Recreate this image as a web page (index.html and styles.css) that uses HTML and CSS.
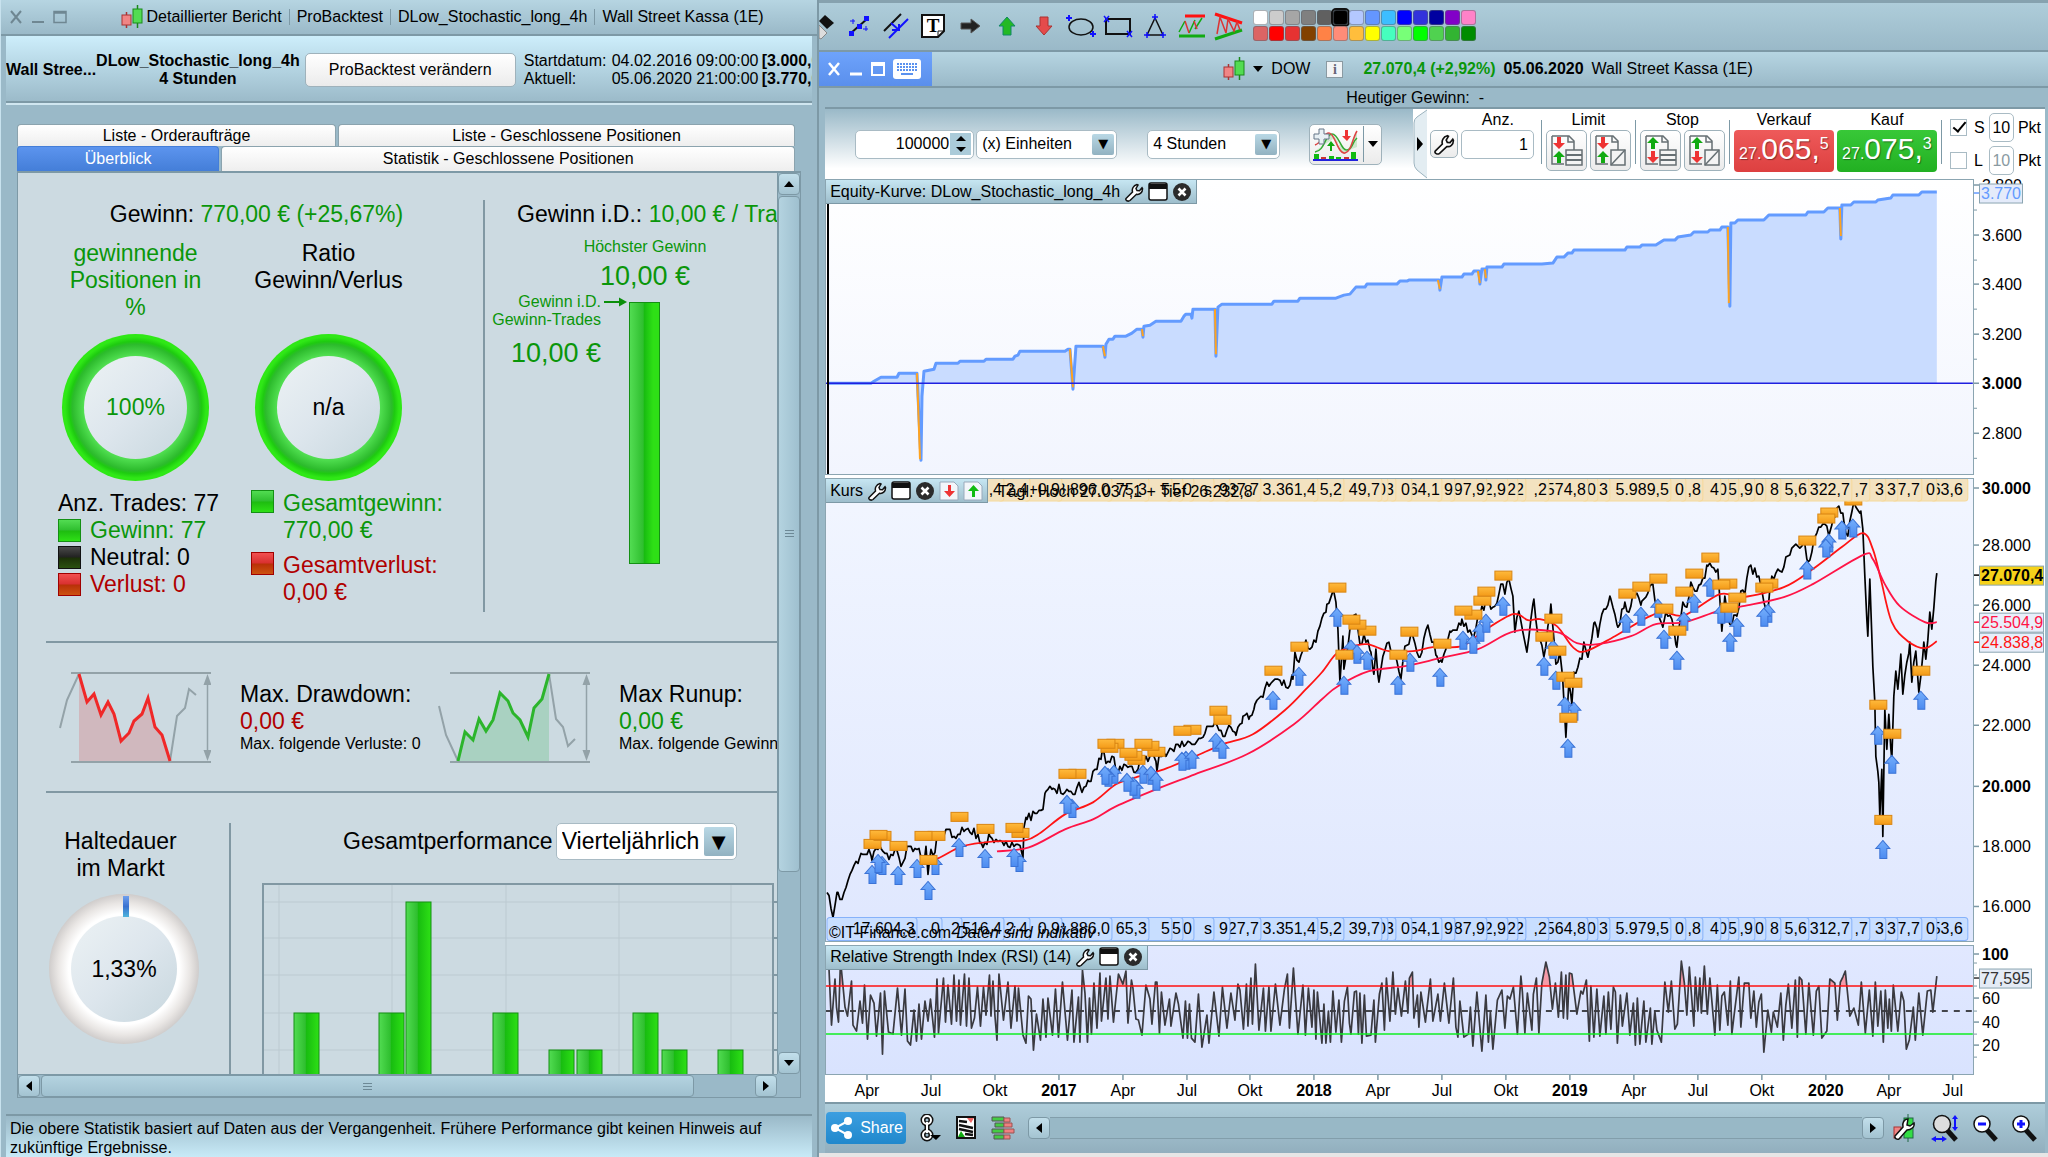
FILE: index.html
```
<!DOCTYPE html>
<html lang="de">
<head>
<meta charset="UTF-8">
<meta name="viewport" content="width=device-width, initial-scale=1.0">
<title>Detaillierter Bericht - ProBacktest</title>
<link rel="stylesheet" href="styles.css">
</head>
<body>

<!-- shared symbols -->
<svg class="symbols" width="0" height="0">
    <symbol id="candles" viewBox="0 0 22 24">
        <path d="M5.5 7v16" stroke="#a33" stroke-width="1.5"/>
        <rect x="1" y="10" width="9" height="10" fill="#f08585" stroke="#a33"/>
        <path d="M16.5 0v23" stroke="#1a8a1a" stroke-width="1.5"/>
        <rect x="12" y="4" width="9" height="14" fill="#52dc52" stroke="#1a8a1a"/>
    </symbol>
    <symbol id="wrench" viewBox="0 0 20 20">
        <path d="M2 16.500L8.500 10c-.8-3 .7-6.500 4.500-7.500l1 .5-2 3.500 1 2 2.500.2 2.500-3 .5.800c.3 4-3 6.500-6 5.800L6 18.500c-2 1.500-5-.2-4-2z" fill="#fff" stroke="#111" stroke-width="1.500"/>
    </symbol>
    <symbol id="maximize" viewBox="0 0 20 20">
        <rect x="1" y="1" width="18" height="17" rx="2" fill="#fff" stroke="#111" stroke-width="1.500"/>
        <path d="M1 2h18v5H1z" fill="#111"/>
    </symbol>
    <symbol id="close" viewBox="0 0 20 20">
        <circle cx="10" cy="10" r="9" fill="#2b2b2b"/>
        <path d="M6.500 6.500l7 7m0-7l-7 7" stroke="#fff" stroke-width="2.600"/>
    </symbol>
    <symbol id="sheet-down" viewBox="0 0 20 20">
        <path d="M1 1h14l4 4v14H1z" fill="#f2f6fa" stroke="#9ab"/>
        <path d="M9 4h3v6h4l-5.500 6L5 10h4z" fill="#e33"/>
    </symbol>
    <symbol id="sheet-up" viewBox="0 0 20 20">
        <path d="M1 1h14l4 4v14H1z" fill="#f2f6fa" stroke="#9ab"/>
        <path d="M9 16h3v-6h4l-5.500-6L5 10h4z" fill="#1b1"/>
    </symbol>
    <symbol id="order-list" viewBox="0 0 34 34">
        <path d="M2 2h17l5 5v9M2 2v28h12" fill="none" stroke="#666f73" stroke-width="1.500"/>
        <path d="M18 2v6h6" fill="none" stroke="#666f73" stroke-width="1.500"/>
        <path d="M16 16h16v15H16z" fill="#f4f4f4" stroke="#666f73" stroke-width="1.500"/>
        <path d="M16 21h16M16 26h16" stroke="#666f73" stroke-width="2"/>
    </symbol>
    <symbol id="order-page" viewBox="0 0 34 34">
        <path d="M2 2h17l5 5v9M2 2v28h12" fill="none" stroke="#666f73" stroke-width="1.500"/>
        <path d="M18 2v6h6" fill="none" stroke="#666f73" stroke-width="1.500"/>
        <path d="M17 16h14v15H17z" fill="#f4f4f4" stroke="#666f73" stroke-width="1.500"/>
        <path d="M17 31L31 16" stroke="#666f73" stroke-width="1.500"/>
    </symbol>
    <symbol id="arr-down" viewBox="0 0 12 12"><path d="M4 0h4v6h4l-6 6-6-6h4z"/></symbol>
    <symbol id="arr-up" viewBox="0 0 12 12"><path d="M4 12h4V6h4L6 0 0 6h4z"/></symbol>
    <linearGradient id="gOrange" x2="0" y2="1"><stop offset="0" stop-color="#ffba3c"/><stop offset="1" stop-color="#f39a18"/></linearGradient>
    <linearGradient id="gBlue" x2="0" y2="1"><stop offset="0" stop-color="#74aefc"/><stop offset="1" stop-color="#4c8bf0"/></linearGradient>
    <linearGradient id="gGreen" x2="1" y2="0"><stop offset="0" stop-color="#52dc52"/><stop offset=".45" stop-color="#2fbf2f"/><stop offset=".5" stop-color="#18bd10"/><stop offset="1" stop-color="#2ee016"/></linearGradient>
</svg>

<div class="desktop">

    <!-- backtest report -->
    <section class="window report">
        <header class="titlebar">
            <div class="win-buttons">
                <button aria-label="Schließen"><svg width="14" height="14"><path d="M2 1l10 12M12 1L2 13" stroke="#6f8792" stroke-width="2"/></svg></button>
                <button aria-label="Minimieren"><svg width="14" height="14"><path d="M1 12h12" stroke="#6f8792" stroke-width="2"/></svg></button>
                <button aria-label="Maximieren"><svg width="14" height="14"><path d="M1 1.500h12v11H1zM1 3h12" fill="none" stroke="#6f8792" stroke-width="1.500"/></svg></button>
            </div>
            <div class="title-text">
                <svg width="22" height="24"><use href="#candles"/></svg>
                <span>Detaillierter Bericht</span><i></i><span>ProBacktest</span><i></i><span>DLow_Stochastic_long_4h</span><i></i><span>Wall Street Kassa (1E)</span>
            </div>
        </header>

        <div class="infobar">
            <b>Wall Stree...</b>
            <b class="strategy">DLow_Stochastic_long_4h<br>4 Stunden</b>
            <button class="btn">ProBacktest verändern</button>
            <div class="dates">
                <span>Startdatum:</span><span>04.02.2016 09:00:00</span><b>[3.000,00 €]</b>
                <span>Aktuell:</span><span>05.06.2020 21:00:00</span><b>[3.770,00 €]</b>
            </div>
        </div>

        <div class="tabs">
            <div class="tab-row">
                <button class="tab tab-orders">Liste - Orderaufträge</button>
                <button class="tab">Liste - Geschlossene Positionen</button>
            </div>
            <div class="tab-row second">
                <button class="tab active">Überblick</button>
                <button class="tab">Statistik - Geschlossene Positionen</button>
            </div>
        </div>

        <div class="pane">
            <div class="overview">
                <div class="block gains">
                    <div class="gain-total">
                        <h2>Gewinn: <span class="green">770,00 € (+25,67%)</span></h2>
                        <div class="gauges">
                            <div class="gauge">
                                <p class="gauge-title green">gewinnende<br>Positionen in<br>%</p>
                                <div class="donut green">100%</div>
                                <div class="legend">
                                    <p>Anz. Trades: 77</p>
                                    <p class="green"><i class="sw sw-green"></i>Gewinn: 77</p>
                                    <p><i class="sw sw-black"></i>Neutral: 0</p>
                                    <p class="red"><i class="sw sw-red"></i>Verlust: 0</p>
                                </div>
                            </div>
                            <div class="gauge">
                                <p class="gauge-title">Ratio<br>Gewinn/Verlus</p>
                                <div class="donut">n/a</div>
                                <div class="legend sums">
                                    <p class="green"><i class="sw sw-green"></i><span>Gesamtgewinn:<br>770,00 €</span></p>
                                    <p class="red"><i class="sw sw-red"></i><span>Gesamtverlust:<br>0,00 €</span></p>
                                </div>
                            </div>
                        </div>
                    </div>
                    <div class="gain-average">
                        <h2>Gewinn i.D.: <span class="green">10,00 € / Trade</span></h2>
                        <div class="highest">
                            <p>Höchster Gewinn</p>
                            <p class="amount">10,00 €</p>
                        </div>
                        <div class="average-row">
                            <div class="average-text">
                                <p>Gewinn i.D.</p>
                                <p>Gewinn-Trades</p>
                                <p class="amount">10,00 €</p>
                            </div>
                            <svg width="24" height="18"><path d="M0 9h17" stroke="#0a8f0a" stroke-width="2"/><path d="M15 4.500l8 4.500-8 4.500z" fill="#0a8f0a"/></svg>
                            <div class="average-bar"></div>
                        </div>
                    </div>
                </div>

                <div class="block extremes">
                    <div class="extreme">
                        <svg width="152" height="96" fill="none">
                            <path d="M20 4L28 32 35 24 42 45 49 32 55 44 62 71 70 63 75 51 83 44 89 28 96 57 103 65 111 91H20z" fill="#e03030" opacity=".2"/>
                            <path d="M12 3h140M12 92h140" stroke="#93a2a8" stroke-width="2"/>
                            <path d="M148.500 10v76" stroke="#93a2a8" stroke-width="1.500"/>
                            <path d="M148.500 4l4 11h-8zM148.500 91l4-11h-8z" fill="#93a2a8"/>
                            <path d="M1 58L8 30 20 4M111 91l7-45 8-8 4-19 7 6" stroke="#93a2a8" stroke-width="2"/>
                            <path d="M20 4L28 32 35 24 42 45 49 32 55 44 62 71 70 63 75 51 83 44 89 28 96 57 103 65 111 91" stroke="#f02828" stroke-width="3"/>
                        </svg>
                        <div>
                            <p>Max. Drawdown:</p>
                            <p class="red">0,00 €</p>
                            <p class="small">Max. folgende Verluste: 0</p>
                        </div>
                    </div>
                    <div class="extreme">
                        <svg width="152" height="96" fill="none">
                            <path d="M20 91L27 62 35 70 41 49 48 61 55 50 62 23 70 31 75 43 82 50 90 67 96 38 104 29 111 4V91z" fill="#20b040" opacity=".2"/>
                            <path d="M12 3h140M12 92h140" stroke="#93a2a8" stroke-width="2"/>
                            <path d="M148.500 10v76" stroke="#93a2a8" stroke-width="1.500"/>
                            <path d="M148.500 4l4 11h-8zM148.500 91l4-11h-8z" fill="#93a2a8"/>
                            <path d="M1 36L8 65 20 91M111 4l7 45 7 8 5 19 7-7" stroke="#93a2a8" stroke-width="2"/>
                            <path d="M20 91L27 62 35 70 41 49 48 61 55 50 62 23 70 31 75 43 82 50 90 67 96 38 104 29 111 4" stroke="#2cb52c" stroke-width="3"/>
                        </svg>
                        <div>
                            <p>Max Runup:</p>
                            <p class="green">0,00 €</p>
                            <p class="small">Max. folgende Gewinne: 77</p>
                        </div>
                    </div>
                </div>

                <div class="block performance">
                    <div class="holding">
                        <p>Haltedauer<br>im Markt</p>
                        <div class="donut donut-grey">1,33%</div>
                    </div>
                    <div class="performance-chart">
                        <div class="performance-head">
                            <label for="period">Gesamtperformance</label>
                            <span class="select select-big"><select id="period"><option>Vierteljährlich</option></select></span>
                        </div>
                        <svg id="bars" width="515" height="196"></svg>
                    </div>
                </div>
            </div>

            <div class="vscroll">
                <button aria-label="Nach oben"><svg width="10" height="8"><path d="M0 7l5-6 5 6z"/></svg></button>
                <div class="thumb"><i></i><i></i><i></i></div>
                <button aria-label="Nach unten"><svg width="10" height="8"><path d="M0 1l5 6 5-6z"/></svg></button>
            </div>
            <div class="hscroll">
                <button aria-label="Nach links"><svg width="8" height="10"><path d="M7 0L1 5l6 5z"/></svg></button>
                <div class="thumb"><i></i><i></i><i></i></div>
                <button aria-label="Nach rechts"><svg width="8" height="10"><path d="M1 0l6 5-6 5z"/></svg></button>
            </div>
        </div>

        <footer class="note">Die obere Statistik basiert auf Daten aus der Vergangenheit. Frühere Performance gibt keinen Hinweis auf zukünftige Ergebnisse.</footer>
    </section>

    <!-- chart window -->
    <section class="window chart">
        <div class="drawbar">
            <button class="pen" aria-label="Stift"><svg width="18" height="30"><path d="M0 10l6-6 9 8-7 6z" fill="#111"/><path d="M0 14l8 8-6 6-2-1z" fill="#ddd" stroke="#888"/></svg></button>
            <button aria-label="Linie"><svg width="30" height="30"><path d="M7 22L23 8" stroke="#111" stroke-width="2"/><path d="M5 20h5v5H5zM20 5h5v5h-5zM13 13h5v5h-5z" fill="#11f"/><path d="M9 13v-5M6 10h5M22 15v5M19 18h5" stroke="#11f"/></svg></button>
            <button aria-label="Kanal"><svg width="30" height="30"><path d="M3 20L20 3" stroke="#111" stroke-width="2"/><path d="M8 27L27 8" stroke="#11f" stroke-width="2"/><path d="M10 12l8 7M18 13v6h-7" fill="none" stroke="#11f" stroke-width="2"/></svg></button>
            <button aria-label="Text"><svg width="30" height="30"><path d="M4 4h22v16l-6 6H4z" fill="#fff" stroke="#111" stroke-width="2"/><path d="M26 20h-6v6" fill="none" stroke="#111"/><text x="15" y="21" class="tool-text">T</text></svg></button>
            <button aria-label="Pfeil rechts"><svg width="30" height="30"><path d="M6 12h10V8l9 7-9 7v-4H6z" fill="#222" stroke="#555"/></svg></button>
            <button aria-label="Pfeil hoch"><svg width="30" height="30"><path d="M11 24v-9H7l8-9 8 9h-4v9z" fill="#24b924" stroke="#186"/></svg></button>
            <button aria-label="Pfeil runter"><svg width="30" height="30"><path d="M11 6v9H7l8 9 8-9h-4V6z" fill="#e44b4b" stroke="#a33"/></svg></button>
            <button aria-label="Ellipse"><svg width="30" height="30"><ellipse cx="15" cy="16" rx="12" ry="8" fill="none" stroke="#111" stroke-width="1.500"/><path d="M3 4v6M0 7h6M27 20v6M24 23h6" stroke="#11f" stroke-width="2"/></svg></button>
            <button aria-label="Rechteck"><svg width="30" height="30"><path d="M3 8h24v15H3z" fill="none" stroke="#111" stroke-width="2"/><path d="M1 5l5 6M6 5l-5 6M24 20l5 6M29 20l-5 6" stroke="#11f" stroke-width="1.500"/></svg></button>
            <button aria-label="Dreieck"><svg width="30" height="30"><path d="M15 7l8 17H7z" fill="none" stroke="#111" stroke-width="1.500"/><path d="M15 3v6M12 6h6M7 21v6M4 24h6M23 21v6M20 24h6" stroke="#11f" stroke-width="1.500"/></svg></button>
            <button aria-label="Keil"><svg width="30" height="30"><path d="M8 5h20" stroke="#f11" stroke-width="3"/><path d="M2 25h26" stroke="#1a1" stroke-width="3"/><path d="M2 21L8 10M12 22l6-13M18 18l7-11" stroke="#1a1" stroke-width="1.500"/><path d="M8 10l4 12M17 10l3 8" fill="none" stroke="#d33" stroke-width="1.500"/></svg></button>
            <button aria-label="Konvergenz"><svg width="30" height="30"><path d="M1 3l27 9" stroke="#f11" stroke-width="3"/><path d="M1 28l27-9" stroke="#1a1" stroke-width="3"/><path d="M3 23L6 6l6 16 2-14 6 12 3-9 3 8" fill="none" stroke="#d33" stroke-width="1.500"/></svg></button>
            <div class="palette" id="palette"></div>
        </div>

        <header class="titlebar chart-title">
            <div class="win-buttons blue">
                <button aria-label="Schließen"><svg width="14" height="14"><path d="M2 1l10 12M12 1L2 13" stroke="#fff" stroke-width="2.500"/></svg></button>
                <button aria-label="Minimieren"><svg width="14" height="14"><path d="M1 12h12" stroke="#fff" stroke-width="3"/></svg></button>
                <button aria-label="Maximieren"><svg width="14" height="14"><path d="M1 1h12v12H1zM1 3h12" fill="none" stroke="#fff" stroke-width="2"/></svg></button>
                <button aria-label="Tastatur"><svg width="28" height="20"><rect width="28" height="20" rx="3" fill="#fff"/><path d="M4 5h20M4 8h20M4 11h20" stroke="#5b92ef" stroke-width="2" stroke-dasharray="2 1"/><path d="M8 15h12" stroke="#5b92ef" stroke-width="2"/></svg></button>
            </div>
            <div class="title-text">
                <svg width="22" height="24"><use href="#candles"/></svg>
                <svg class="caret" width="10" height="6"><path d="M0 0h10L5 6z"/></svg>
                <span>DOW</span>
                <span class="info">i</span>
                <b class="green">27.070,4 (+2,92%)</b>
                <b>05.06.2020</b>
                <span>Wall Street Kassa (1E)</span>
            </div>
        </header>

        <div class="daily">Heutiger Gewinn:&nbsp; -</div>

        <div class="controls">
            <div class="spinner">
                <input type="text" value="100000" aria-label="Anzahl Einheiten">
                <span><button aria-label="Mehr"><svg width="10" height="5"><path d="M0 5l5-5 5 5z"/></svg></button><button aria-label="Weniger"><svg width="10" height="5"><path d="M0 0l5 5 5-5z"/></svg></button></span>
            </div>
            <span class="select units"><select aria-label="Einheiten"><option>(x) Einheiten</option></select></span>
            <span class="select timeframe"><select aria-label="Zeitrahmen"><option>4 Stunden</option></select></span>
            <button class="btn indicator" aria-label="Indikatoren">
                <svg width="46" height="34">
                    <path d="M2 24C12 24 12 6 19 8s8 20 13 18 6-15 12-20v14L34 24 20 12z" fill="#cde8cc"/>
                    <path d="M2 25C12 24 12 7 19 7s9 17 15 16 5-8 10-12" fill="none" stroke="#3a3" stroke-width="1.500"/>
                    <path d="M2 18c8-3 8-12 14-12s9 22 16 20 7-14 12-22" fill="none" stroke="#d44" stroke-width="1.500"/>
                    <path d="M6 2h5v5h5v5h-5v5H6v-5H1V7h5z" fill="#e8f0f4" stroke="#678"/>
                    <path d="M17 24v-5h-3l4-5 4 5h-3v5z" fill="#1a1"/><path d="M32 3v6h-3l5 5 4-5h-3V3z" fill="#e33"/>
                    <path d="M1 27h5v6H1zM16 29h5v4h-5zM23 30h5v3h-5zM38 25h5v8h-5z" fill="#1b1"/><path d="M8 30h5v3H8zM31 30h5v3h-5z" fill="#c33"/>
                    <path d="M0 33h45" stroke="#22d" stroke-width="2"/>
                </svg>
                <i></i><svg width="10" height="6"><path d="M0 0h10L5 6z"/></svg>
            </button>

            <div class="trade">
                <svg class="trade-edge" width="14" height="70"><path d="M14 1L4 8Q1 10 1 14V54Q1 58 4 61L14 69" fill="#e3edf2" stroke="#9cb3be"/><path d="M4 28l6 7-6 7z"/></svg>
                <div class="field count">
                    <label for="count">Anz.</label>
                    <div><button class="btn tool" aria-label="Einstellungen"><svg width="22" height="22"><use href="#wrench"/></svg></button><input id="count" type="text" value="1"></div>
                </div>
                <i class="rule"></i>
                <div class="field">
                    <span>Limit</span>
                    <div>
                        <button class="btn order" aria-label="Limit Liste"><svg width="34" height="34"><use href="#order-list"/><use href="#arr-down" x="3" y="3" width="12" height="12" fill="#e33"/><use href="#arr-up" x="3" y="17" width="12" height="12" fill="#1a1"/></svg></button>
                        <button class="btn order" aria-label="Limit Seite"><svg width="34" height="34"><use href="#order-page"/><use href="#arr-down" x="3" y="3" width="12" height="12" fill="#e33"/><use href="#arr-up" x="3" y="17" width="12" height="12" fill="#1a1"/></svg></button>
                    </div>
                </div>
                <i class="rule"></i>
                <div class="field">
                    <span>Stop</span>
                    <div>
                        <button class="btn order" aria-label="Stop Liste"><svg width="34" height="34"><use href="#order-list"/><use href="#arr-up" x="3" y="3" width="12" height="12" fill="#1a1"/><use href="#arr-down" x="3" y="17" width="12" height="12" fill="#e33"/></svg></button>
                        <button class="btn order" aria-label="Stop Seite"><svg width="34" height="34"><use href="#order-page"/><use href="#arr-up" x="3" y="3" width="12" height="12" fill="#1a1"/><use href="#arr-down" x="3" y="17" width="12" height="12" fill="#e33"/></svg></button>
                    </div>
                </div>
                <i class="rule"></i>
                <div class="field prices">
                    <span>Verkauf</span>
                    <button class="price sell"><small>27.</small>065,<sup>5</sup></button>
                </div>
                <div class="field prices">
                    <span>Kauf</span>
                    <button class="price buy"><small>27.</small>075,<sup>3</sup></button>
                </div>
                <i class="rule"></i>
                <div class="stops">
                    <div><input type="checkbox" id="stop" checked><label for="stop">S</label><input type="text" value="10" aria-label="Stop Punkte"><span>Pkt</span></div>
                    <div><input type="checkbox" id="limit"><label for="limit">L</label><input type="text" value="10" aria-label="Limit Punkte" class="off"><span>Pkt</span></div>
                </div>
            </div>
        </div>

        <div class="plots">
            <div class="plot-row equity">
                <div class="plot">
                    <svg id="equity" viewBox="826 181 1147 294" preserveAspectRatio="none"></svg>
                    <div class="plot-title">
                        <span>Equity-Kurve: DLow_Stochastic_long_4h</span>
                        <svg width="20" height="20"><use href="#wrench"/></svg>
                        <svg width="20" height="20"><use href="#maximize"/></svg>
                        <svg width="20" height="20"><use href="#close"/></svg>
                    </div>
                </div>
                <svg class="axis" id="equity-axis" viewBox="1974 180 71 296" preserveAspectRatio="none"></svg>
            </div>
            <div class="plot-row price-plot">
                <div class="plot">
                    <svg id="price" viewBox="826 480 1147 461" preserveAspectRatio="none"></svg>
                    <div class="plot-title">
                        <span>Kurs</span>
                        <svg width="20" height="20"><use href="#wrench"/></svg>
                        <svg width="20" height="20"><use href="#maximize"/></svg>
                        <svg width="20" height="20"><use href="#close"/></svg>
                        <svg width="20" height="20"><use href="#sheet-down"/></svg>
                        <svg width="20" height="20"><use href="#sheet-up"/></svg>
                    </div>
                </div>
                <svg class="axis" id="price-axis" viewBox="1974 479 71 463" preserveAspectRatio="none"></svg>
            </div>
            <div class="plot-row rsi-plot">
                <div class="plot">
                    <svg id="rsi" viewBox="826 946 1147 128" preserveAspectRatio="none"></svg>
                    <div class="plot-title">
                        <span>Relative Strength Index (RSI) (14)</span>
                        <svg width="20" height="20"><use href="#wrench"/></svg>
                        <svg width="20" height="20"><use href="#maximize"/></svg>
                        <svg width="20" height="20"><use href="#close"/></svg>
                    </div>
                </div>
                <svg class="axis" id="rsi-axis" viewBox="1974 945 71 130" preserveAspectRatio="none"></svg>
            </div>
            <svg class="time-axis" id="time-axis" viewBox="825 1075 1220 27" preserveAspectRatio="none"></svg>
        </div>

        <div class="bottombar">
            <button class="share"><svg width="22" height="22"><path d="M17 4L4 11l13 7" fill="none" stroke="#fff" stroke-width="2"/><circle cx="17" cy="4" r="4" fill="#fff"/><circle cx="4" cy="11" r="4" fill="#fff"/><circle cx="17" cy="18" r="4" fill="#fff"/></svg>Share</button>
            <button aria-label="Verknüpfen"><svg width="24" height="28"><g fill="none" stroke="#111" stroke-width="5"><circle cx="9" cy="6" r="4"/><circle cx="9" cy="21" r="4"/><path d="M9 8v11"/></g><g fill="none" stroke="#fff" stroke-width="2"><circle cx="9" cy="6" r="4"/><circle cx="9" cy="21" r="4"/><path d="M9 8v11"/></g><path d="M12 21h11l-5 5z"/></svg></button>
            <button aria-label="Liste"><svg width="22" height="26"><path d="M2 2h18v21H2z" fill="#fff" stroke="#111" stroke-width="2"/><path d="M4 6l8 1M4 10l14 3M4 14l14 3M10 19l8 1" stroke="#111" stroke-width="2.500"/><path d="M12 3h7l-3 5z" fill="#e66"/><path d="M3 22h7l-4-6z" fill="#1a1"/></svg></button>
            <button aria-label="Orderbuch"><svg width="26" height="26"><path d="M2 2h12v4H2zM5 8h9v4H5zM2 14h12v4H2zM4 20h10v4H4z" fill="#4c4" stroke="#555"/><path d="M14 3h6v4h-6zM14 8h8v4h-8zM14 14h10v4H14zM14 20h6v4h-6z" fill="#f08080" stroke="#955"/></svg></button>
            <div class="chart-scroll">
                <button aria-label="Zurück"><svg width="8" height="10"><path d="M7 0L1 5l6 5z"/></svg></button>
                <div></div>
                <button aria-label="Vor"><svg width="8" height="10"><path d="M1 0l6 5-6 5z"/></svg></button>
            </div>
            <button aria-label="Darstellung"><svg width="26" height="28"><path d="M16 0v28" stroke="#264"/><rect x="12" y="4" width="9" height="20" fill="#3d4" stroke="#264"/><rect x="2" y="13" width="7" height="11" fill="#f08585" stroke="#a33"/><path d="M3 22L11 13c-1-4 1-8 5-8l-1 6 3 1 4-3c1 4-3 7-7 7l-8 9c-2 1-5-1-4-3z" fill="#fff" stroke="#111" stroke-width="1.500"/></svg></button>
            <button aria-label="Zoom anpassen"><svg width="28" height="28"><path d="M16 16l9 10" stroke="#111" stroke-width="5"/><circle cx="11" cy="10" r="8.500" fill="#ddd" stroke="#111" stroke-width="1.500"/><path d="M24 3v12M3 25h10" stroke="#11f" stroke-width="2"/><path d="M21 5l3-4 3 4zM21 13l3 4 3-4zM5 22l-5 3 5 3zM11 22l5 3-5 3z" fill="#11f"/></svg></button>
            <button aria-label="Verkleinern"><svg width="26" height="28"><path d="M14 15l10 11" stroke="#111" stroke-width="5"/><circle cx="10" cy="10" r="8" fill="#fff" stroke="#111" stroke-width="1.500"/><path d="M6 10h8" stroke="#11f" stroke-width="3"/></svg></button>
            <button aria-label="Vergrößern"><svg width="26" height="28"><path d="M14 15l10 11" stroke="#111" stroke-width="5"/><circle cx="10" cy="10" r="8" fill="#fff" stroke="#111" stroke-width="1.500"/><path d="M6 10h8M10 6v8" stroke="#11f" stroke-width="3"/></svg></button>
        </div>
    </section>
</div>

<script src="script.js"></script>
</body>
</html>
```

FILE: styles.css
```
* {
    box-sizing: border-box;
}

body {
    margin: 0;
    font-family: "Liberation Sans", Arial, sans-serif;
    font-size: 16px;
    line-height: 18px;
    color: #000;
    background-color: #e6e6e6;
}

p, h2 {
    margin: 0;
    font-weight: normal;
}

button, input, select {
    font: inherit;
    color: inherit;
    padding: 0;
    margin: 0;
    border: 0;
    background: none;
}

svg {
    display: block;
    flex: none;
}

.symbols {
    position: absolute;
}

.green { color: #0a960a; }
.red { color: #b00000; }

.desktop {
    display: grid;
    grid-template-columns: 2fr 3fr;
    height: 100vh;
    overflow: hidden;
}

.window {
    display: flex;
    flex-direction: column;
    min-width: 0;
    min-height: 0;
    background-color: #9ab9c8;
}

.btn {
    border: 1px solid #9fb2bb;
    border-radius: 5px;
    background: linear-gradient(#fff, #ebebeb);
}

/* title bars */
.titlebar {
    display: flex;
    align-items: center;
    height: 36px;
    flex: none;
    background: linear-gradient(#b6d5e2, #9ab9c8);
    border-bottom: 2px solid #7d99a6;
}

.win-buttons {
    display: flex;
    align-items: center;
    gap: 8px;
    padding-left: 8px;
}

.win-buttons.blue {
    align-self: stretch;
    width: 113px;
    background: linear-gradient(#6ea3fb, #5a8fec);
}

.title-text {
    flex: 1;
    display: flex;
    align-items: center;
    justify-content: center;
    white-space: nowrap;
}

.title-text svg {
    margin-right: 4px;
}

.title-text i {
    width: 1px;
    height: 16px;
    margin: 0 7px;
    background-color: #7d99a6;
}

/* report window */
.report {
    padding: 0 5px;
    border-right: 2px solid #7d99a6;
    border-left: 1px solid #c8e2ee;
}

.report .titlebar {
    margin: 0 -5px;
}

.infobar {
    display: flex;
    align-items: center;
    height: 69px;
    flex: none;
    overflow: hidden;
    white-space: nowrap;
    background: linear-gradient(#cdeefb, #9ab9c8);
    border-bottom: 2px solid #d0e6f0;
    box-shadow: inset 0 -2px 0 #7d99a6;
}

.infobar .strategy {
    text-align: center;
    margin-right: 5px;
}

.infobar .btn {
    width: 211px;
    height: 34px;
    flex: none;
    margin-right: 8px;
}

.dates {
    display: grid;
    grid-template-columns: 88px 150px auto;
}

.tabs {
    margin: 19px 17px 0 11px;
    flex: none;
}

.tab-row {
    display: flex;
    gap: 2px;
    height: 22px;
}

.tab-row.second {
    height: 25px;
}

.tab {
    flex: 1;
    border: 1px solid #8ba3ae;
    border-bottom: 0;
    border-radius: 4px 4px 0 0;
    background: linear-gradient(#fff, #eee);
}

.tab-orders {
    flex: 0 0 41%;
}

.tab.active {
    flex: 0 0 26%;
    color: #fff;
    background: linear-gradient(#5c94ee, #447ed8);
    border-color: #447ed8;
}

.pane {
    flex: 1;
    min-height: 0;
    margin: 0 11px;
    display: grid;
    grid-template-columns: minmax(0, 1fr) 23px;
    grid-template-rows: minmax(0, 1fr) 23px;
    border: 1px solid #7d99a6;
    border-top-width: 2px;
}

.overview {
    overflow: hidden;
    padding: 27px 0 0 28px;
    background-color: #ccdae1;
    font-size: 23px;
    line-height: 27px;
    white-space: nowrap;
}

.block {
    display: flex;
}

.gains {
    height: 412px;
    margin-bottom: 29px;
}

.gains h2 {
    font-size: 23px;
    line-height: 28px;
}

.gain-total {
    width: 439px;
    flex: none;
    border-right: 2px solid #8198a3;
}

.gain-total h2 {
    padding-right: 16px;
    text-align: center;
}

.gauges {
    display: flex;
    gap: 14px;
    margin-top: 12px;
}

.gauge {
    width: 179px;
}

.gauge-title {
    height: 81px;
    text-align: center;
}

.donut {
    position: relative;
    display: flex;
    align-items: center;
    justify-content: center;
    width: 147px;
    height: 147px;
    margin: 13px auto 9px;
    border-radius: 50%;
    background: radial-gradient(closest-side, #52e052 70%, #2cbb2c 86%, #1ecb10 90%, #2fe816 96%);
    isolation: isolate;
}

.donut::before {
    content: "";
    position: absolute;
    inset: 22px;
    z-index: -1;
    border-radius: 50%;
    background: linear-gradient(135deg, #ecf2f4, #dde6ed 50%, #ccdae1 90%);
}

.donut-grey {
    width: 150px;
    height: 150px;
    margin: 12px 0 0 3px;
    background: radial-gradient(closest-side, #fff 74%, #e9e6e4 88%, #cfcccb 100%);
}

.donut-grey::after {
    content: "";
    position: absolute;
    top: 2px;
    left: 74px;
    width: 6px;
    height: 21px;
    background: linear-gradient(#6e9fee, #3a72d0 50%, #4eb4dc);
}

.legend {
    padding-left: 12px;
}

.legend p {
    display: flex;
    align-items: center;
    gap: 9px;
}

.legend.sums p {
    align-items: flex-start;
    margin-bottom: 8px;
}

.sw {
    width: 23px;
    height: 23px;
    flex: none;
    border: 1px solid;
}

.sw-green {
    border-color: #149014;
    background: linear-gradient(#52dc52, #2fbf2f 48%, #1ebc10 52%, #2ee016);
}

.sw-black {
    border-color: #111;
    background: linear-gradient(#4a4a4a, #222 48%, #1c3008 52%, #2a5010);
}

.sw-red {
    border-color: #a00000;
    background: linear-gradient(#f25050, #d83030 48%, #b83008 52%, #cc5210);
}

.gain-average {
    color: #0a960a;
    font-size: 16px;
    line-height: 18px;
}

.gain-average h2 {
    color: #000;
    padding-left: 32px;
}

.highest {
    width: 320px;
    margin-top: 10px;
    text-align: center;
}

.amount {
    font-size: 27px;
    line-height: 33px;
}

.highest .amount {
    padding-top: 4px;
}

.average-row {
    display: flex;
}

.average-text {
    width: 116px;
    margin-right: 3px;
    text-align: right;
}

.average-text .amount {
    margin-top: 8px;
}

.average-bar {
    width: 31px;
    height: 262px;
    margin: 9px 0 0 1px;
    border: 1px solid #149014;
    background: linear-gradient(90deg, #52dc52, #2fbf2f 45%, #18bd10 50%, #2ee016 80%);
}

.extremes {
    height: 150px;
    padding: 27px 0 0 13px;
    border-top: 2px solid #8198a3;
}

.extreme {
    display: flex;
    gap: 29px;
    width: 379px;
    flex: none;
}

.extreme div {
    padding-top: 11px;
}

.small {
    font-size: 16px;
    line-height: 18px;
}

.performance {
    border-top: 2px solid #8198a3;
    padding-top: 30px;
}

.holding {
    width: 185px;
    height: 260px;
    padding: 5px 34px 0 0;
    flex: none;
    text-align: center;
    border-right: 2px solid #8198a3;
}

.performance-chart {
    padding-left: 31px;
}

.performance-head {
    display: flex;
    align-items: center;
    gap: 3px;
    padding-left: 81px;
    margin-bottom: 23px;
}

/* drop-downs */
.select {
    position: relative;
    display: block;
    height: 29px;
    border: 1px solid #a9bbc4;
    border-radius: 5px;
    background-color: #fff;
}

.select select {
    width: 100%;
    height: 100%;
    padding-left: 5px;
    appearance: none;
}

.select::after {
    content: "▼";
    position: absolute;
    top: 3px;
    right: 2px;
    bottom: 3px;
    width: 22px;
    display: flex;
    align-items: center;
    justify-content: center;
    border-radius: 2px;
    background: linear-gradient(#b9d8e5, #92b2c1);
    font-family: "DejaVu Sans", sans-serif;
    font-size: 13px;
    pointer-events: none;
}

.select-big {
    width: 181px;
    height: 37px;
}

.select-big::after {
    width: 30px;
    font-size: 18px;
}

/* scroll bars */
.vscroll,
.hscroll {
    display: flex;
    background-color: #9ab9c8;
}

.vscroll {
    flex-direction: column;
    border-left: 1px solid #7d99a6;
}

.hscroll {
    border-top: 1px solid #7d99a6;
}

.vscroll button,
.hscroll button,
.chart-scroll button {
    width: 22px;
    height: 22px;
    display: flex;
    align-items: center;
    justify-content: center;
    flex: none;
    border: 1px solid #7d99a6;
    border-radius: 4px;
    background: linear-gradient(#c2dfeb, #a3c3d1);
}

.vscroll button:last-child {
    margin-top: auto;
}

.hscroll button:last-child {
    margin-left: auto;
}

.thumb {
    display: flex;
    flex-direction: column;
    align-items: center;
    justify-content: center;
    gap: 2px;
    border: 1px solid #7d99a6;
    border-radius: 4px;
    background: linear-gradient(#b4d3e0, #9fc0cf);
}

.thumb i {
    width: 9px;
    height: 1px;
    background-color: #6d8996;
}

.vscroll .thumb {
    height: 75%;
    margin-top: 1px;
    background: linear-gradient(90deg, #b4d3e0, #9fc0cf);
}

.hscroll .thumb {
    width: 86%;
    margin-left: 1px;
}

.note {
    flex: none;
    height: 43px;
    margin-top: 16px;
    padding: 3px 4px 0;
    line-height: 19px;
    border-top: 2px solid #7d99a6;
    background: linear-gradient(#9ab9c8, #c8eaf7);
}

/* chart window */
.chart {
    padding: 0 3px 0 6px;
    margin-bottom: 4px;
}

.drawbar {
    display: flex;
    align-items: center;
    height: 52px;
    flex: none;
    margin: 0 -3px 0 -6px;
    padding-bottom: 2px;
    gap: 7px;
    border-top: 3px solid #86a2af;
    border-bottom: 2px solid #7d99a6;
    background: linear-gradient(#aecdda, #9ab9c8);
}

.tool-text {
    font: bold 19px "Liberation Serif", serif;
    text-anchor: middle;
}

.palette {
    display: grid;
    grid-template-columns: repeat(14, 15px);
    gap: 1px;
    margin-left: 2px;
}

.palette button {
    height: 15px;
    border: 1px solid rgba(90, 100, 110, 0.5);
    border-radius: 3px;
}

.palette .selected {
    outline: 2px solid #111;
}

.chart-title {
    margin: 0 -3px 0 -6px;
}

.chart-title .title-text {
    gap: 8px;
    padding-right: 4px;
}

.chart-title .title-text svg {
    margin-right: 0;
}

.info {
    width: 17px;
    height: 17px;
    margin: 0 12px 0 8px;
    text-align: center;
    font: bold 14px/16px "Liberation Serif", serif;
    color: #667;
    border: 1px solid #8a9aa2;
    background-color: #f1f4f6;
}

.daily {
    height: 21px;
    flex: none;
    padding-right: 40px;
    line-height: 20px;
    text-align: center;
    border-bottom: 2px solid #7d99a6;
}

.controls {
    display: flex;
    align-items: center;
    height: 70px;
    flex: none;
    padding-left: 30px;
    background: linear-gradient(#9ab9c8, #fff 85%);
}

.spinner {
    display: flex;
    align-items: center;
    width: 119px;
    height: 29px;
    margin-right: 2px;
    padding-right: 2px;
    border: 1px solid #a9bbc4;
    border-radius: 5px;
    background-color: #fff;
}

.spinner input {
    flex: 1;
    width: 0;
    padding-right: 1px;
    text-align: right;
}

.spinner button {
    display: flex;
    align-items: center;
    justify-content: center;
    width: 21px;
    height: 11px;
    background-color: #abcbd9;
}

.units {
    width: 141px;
    margin-right: 30px;
}

.timeframe {
    width: 133px;
    margin-right: 29px;
}

.indicator {
    display: flex;
    align-items: center;
    gap: 4px;
    width: 73px;
    height: 41px;
    padding-left: 3px;
}

.indicator i {
    width: 1px;
    height: 36px;
    background-color: #7d99a6;
}

.trade {
    display: flex;
    align-self: stretch;
    margin-left: auto;
    padding: 2px 4px 0 0;
    gap: 4px;
    background-color: #fff;
}

.trade-edge {
    margin: -2px 0 0;
}

.field {
    display: flex;
    flex-direction: column;
    align-items: center;
}

.field div {
    display: flex;
    gap: 3px;
}

.field > span,
.field > label {
    height: 19px;
}

.count {
    margin: 0 3px 0 -1px;
}

.count > label {
    padding-left: 32px;
}

.count input {
    width: 73px;
    height: 29px;
    padding-right: 5px;
    text-align: right;
    border: 1px solid #a9bbc4;
    border-radius: 5px;
}

.tool {
    width: 28px;
    height: 28px;
    display: flex;
    align-items: center;
    justify-content: center;
}

.order {
    width: 41px;
    height: 41px;
    padding-left: 3px;
}

.rule {
    width: 1px;
    height: 44px;
    margin-top: 9px;
    background-color: #7d99a6;
}

.price {
    width: 100px;
    height: 42px;
    border-radius: 4px;
    color: #fff;
    font-size: 30px;
    line-height: 38px;
    white-space: nowrap;
    text-shadow: 1px 1px 1px rgba(0, 0, 0, 0.4);
}

.price small {
    font-size: 16px;
}

.price sup {
    font-size: 16px;
    line-height: 16px;
    vertical-align: 10px;
}

.prices + .prices {
    margin-left: -1px;
}

.sell { background: linear-gradient(#ee5a5a, #dd4040); }
.buy { background: linear-gradient(#38c838, #22b022); }

.stops {
    padding-left: 4px;
}

.stops div {
    display: flex;
    align-items: center;
    height: 29px;
    margin: 2px 0 4px;
}

.stops label {
    width: 22px;
    padding-left: 7px;
}

.stops input[type="text"] {
    width: 25px;
    height: 29px;
    margin-right: 4px;
    text-align: center;
    border: 1px solid #a9bbc4;
    border-radius: 5px;
}

.stops .off {
    color: #8a9aa2;
}

.stops input[type="checkbox"] {
    position: relative;
    width: 17px;
    height: 17px;
    appearance: none;
    border: 1px solid #a9bbc4;
    background-color: #fff;
}

.stops input[type="checkbox"]:checked::after {
    content: "";
    position: absolute;
    left: 5px;
    top: -1px;
    width: 5px;
    height: 11px;
    border: solid #000;
    border-width: 0 2px 2px 0;
    transform: rotate(40deg);
}

/* plots */
.plots {
    flex: 1;
    min-height: 0;
    display: flex;
    flex-direction: column;
    background-color: #fff;
    gap: 3px;
}

.plot-row {
    display: flex;
    min-height: 0;
}

.equity { flex: 296 1 0; }
.price-plot { flex: 463 1 0; }
.rsi-plot { flex: 130 1 0; }

.plot {
    position: relative;
    flex: 1;
    min-width: 0;
    border: 1px solid #8ba5b1;
}

.plot > svg {
    width: 100%;
    height: 100%;
}

.equity .plot { background: linear-gradient(#fff, #f2f5fe); }
.price-plot .plot { background: linear-gradient(#f2f6ff, #dfe7fe); }
.rsi-plot .plot { background: linear-gradient(#e1e8ff, #d9e3fe); }

.plot-title {
    position: absolute;
    top: 0;
    left: 0;
    display: flex;
    align-items: center;
    gap: 4px;
    height: 24px;
    padding: 0 4px;
    white-space: nowrap;
    background: linear-gradient(#c6e6f2, #9ebecc);
    border-right: 1px solid #7d99a6;
    border-bottom: 1px solid #7d99a6;
}

.axis {
    width: 71px;
    height: 100%;
}

.time-axis {
    width: 100%;
    height: 27px;
    margin-top: -3px;
}

.plots text {
    font-size: 16px;
}

.plots .bold {
    font-weight: bold;
}

.plots .copyright {
    font-style: italic;
}

.plots .level {
    text-anchor: end;
}

.time-axis text {
    text-anchor: middle;
}

.bottombar {
    display: flex;
    align-items: center;
    gap: 13px;
    height: 51px;
    flex: none;
    padding: 0 8px 2px 0;
    border-top: 2px solid #7d99a6;
    background: linear-gradient(#aecdda, #92afbe);
}

.share {
    display: flex;
    align-items: center;
    gap: 7px;
    width: 80px;
    height: 32px;
    margin: 0 -1px 0 1px;
    padding-left: 5px;
    color: #fff;
    border-radius: 4px;
    background: linear-gradient(#3c9ee0, #2088cc);
}

.chart-scroll {
    flex: 1;
    display: flex;
    height: 22px;
    margin: 0 -5px 0 -1px;
}

.chart-scroll div {
    flex: 1;
    border: solid #829eab;
    border-width: 1px 0;
    background-color: #98b8c6;
}
```

FILE: script.js
```
const COLORS = [
    '#ffffff', '#cccccc', '#a6a6a6', '#808080', '#606060', '#000000', '#b4c8ff', '#6496ff', '#3cbeff', '#0000ff', '#3232dc', '#0000a0', '#8200c8', '#ff82c8',
    '#dc6464', '#ff0000', '#e63232', '#824100', '#ff8246', '#ff8c78', '#ffbe3c', '#ffff00', '#46ffbe', '#78ff78', '#00ff00', '#50d250', '#32b432', '#008c00'
];

const EQUITY = [[827,384],[871,384],[874,382],[881,378],[897,378],[899,374],[917,374],[921,461],[922,397],[924,372],[934,370],[936,364],[958,364],[960,362],[984,362],[986,360],[1013,360],[1015,357],[1018,356],[1020,352],[1065,352],[1068,350],[1070,350],[1073,390],[1076,347],[1103,347],[1105,358],[1106,345],[1109,340],[1113,340],[1115,337],[1126,337],[1132,334],[1137,330],[1142,330],[1143,338],[1144,327],[1150,326],[1156,322],[1181,322],[1184,317],[1186,315],[1191,315],[1192,319],[1193,310],[1215,310],[1216,357],[1218,308],[1222,305],[1272,305],[1274,302],[1298,302],[1300,299],[1336,299],[1344,296],[1350,295],[1356,288],[1365,288],[1367,285],[1397,285],[1400,282],[1407,282],[1409,281],[1439,281],[1440,291],[1442,278],[1462,278],[1464,275],[1472,275],[1474,272],[1479,272],[1480,285],[1482,270],[1485,270],[1486,281],[1487,268],[1502,268],[1504,265],[1542,265],[1553,264],[1557,258],[1564,258],[1568,254],[1572,254],[1574,251],[1625,251],[1627,248],[1640,248],[1642,246],[1656,246],[1664,241],[1675,241],[1678,238],[1691,236],[1694,233],[1708,233],[1710,231],[1720,231],[1722,228],[1728,228],[1730,307],[1731,224],[1735,224],[1738,221],[1764,221],[1769,216],[1806,216],[1808,213],[1824,213],[1828,209],[1840,209],[1841,240],[1842,206],[1851,206],[1854,203],[1876,203],[1878,201],[1891,199],[1893,196],[1919,196],[1922,193],[1937,193]];
const DRAWDOWNS = [[917,374,920,460],[1070,350,1073,388],[1103,347,1105,357],[1142,330,1143,337],[1215,310,1216,355],[1438,281,1440,290],[1478,272,1480,284],[1485,270,1486,279],[1728,228,1729,304],[1840,209,1841,237]];

const PRICE = [[827,893],[833,918],[838,893],[842,900],[850,875],[859,860],[869,850],[872,861],[879,845],[889,860],[895,850],[901,867],[909,847],[917,850],[923,860],[926,847],[928,875],[931,850],[935,853],[938,835],[946,830],[954,837],[962,828],[970,833],[978,835],[981,843],[983,848],[990,837],[1002,842],[1018,845],[1021,850],[1023,858],[1024,828],[1027,820],[1043,810],[1046,792],[1053,789],[1067,790],[1073,795],[1079,783],[1082,793],[1089,782],[1093,772],[1101,760],[1102,753],[1108,762],[1114,758],[1116,772],[1124,765],[1134,773],[1142,760],[1154,757],[1157,772],[1160,757],[1168,753],[1176,745],[1193,745],[1203,738],[1209,727],[1215,723],[1223,737],[1231,728],[1236,736],[1243,717],[1250,717],[1255,705],[1263,698],[1267,683],[1278,680],[1286,688],[1293,680],[1295,653],[1299,663],[1304,647],[1316,643],[1320,627],[1327,605],[1334,593],[1336,603],[1338,630],[1340,683],[1343,637],[1344,670],[1350,630],[1356,615],[1360,645],[1364,635],[1371,653],[1374,675],[1376,650],[1379,683],[1383,657],[1389,643],[1397,662],[1401,680],[1405,647],[1413,637],[1420,658],[1428,626],[1437,657],[1442,663],[1451,633],[1462,620],[1474,637],[1478,617],[1487,603],[1495,607],[1501,585],[1505,595],[1509,580],[1513,597],[1515,633],[1519,612],[1527,653],[1534,600],[1538,637],[1544,658],[1551,605],[1556,665],[1560,653],[1563,683],[1566,738],[1569,683],[1572,705],[1574,673],[1582,660],[1584,643],[1588,658],[1595,623],[1598,638],[1604,610],[1611,600],[1618,628],[1625,603],[1629,613],[1633,595],[1642,602],[1653,585],[1658,613],[1663,628],[1666,613],[1672,620],[1677,648],[1683,603],[1687,608],[1691,583],[1695,592],[1701,585],[1708,567],[1718,570],[1722,632],[1725,597],[1730,625],[1737,617],[1741,592],[1745,595],[1749,568],[1759,577],[1764,603],[1768,613],[1772,577],[1782,573],[1788,557],[1796,545],[1805,545],[1808,563],[1813,547],[1821,528],[1830,533],[1833,520],[1839,507],[1844,522],[1848,537],[1852,513],[1854,503],[1861,512],[1863,530],[1865,577],[1868,637],[1870,580],[1873,667],[1875,703],[1876,757],[1879,783],[1880,817],[1882,770],[1883,837],[1885,710],[1887,750],[1889,715],[1892,760],[1894,697],[1896,672],[1898,690],[1901,655],[1903,695],[1910,643],[1912,683],[1916,652],[1919,693],[1924,643],[1926,660],[1930,613],[1932,630],[1937,574]];
const MA_FAST = [[914,865],[938,859],[962,847],[994,842],[1025,841],[1041,833],[1065,815],[1093,803],[1116,785],[1136,778],[1164,770],[1195,757],[1223,745],[1253,735],[1286,710],[1306,690],[1322,673],[1336,655],[1350,648],[1367,645],[1389,652],[1413,652],[1433,648],[1462,647],[1482,633],[1513,615],[1528,621],[1540,620],[1557,627],[1573,648],[1586,652],[1615,637],[1648,618],[1664,613],[1685,616],[1720,595],[1743,598],[1784,588],[1813,570],[1842,548],[1863,534],[1873,550],[1881,580],[1892,623],[1908,642],[1925,649],[1937,642]];
const MA_SLOW = [[997,852],[1029,848],[1065,830],[1093,820],[1116,807],[1156,790],[1195,775],[1247,755],[1294,725],[1322,700],[1338,687],[1369,672],[1405,667],[1440,659],[1478,650],[1515,632],[1557,633],[1577,644],[1598,645],[1631,637],[1656,625],[1685,623],[1718,612],[1743,607],[1784,598],[1813,585],[1863,556],[1873,560],[1885,585],[1900,607],[1925,623],[1937,623]];

const EXITS = [[872,844],[882,836],[878,835],[898,846],[936,836],[923,836],[928,860],[959,817],[985,829],[1020,833],[1014,828],[1077,774],[1067,774],[1115,744],[1109,748],[1106,744],[1136,760],[1133,756],[1128,753],[1156,752],[1150,746],[1143,744],[1192,730],[1182,731],[1218,711],[1222,720],[1273,671],[1299,647],[1337,588],[1367,631],[1357,625],[1351,620],[1344,655],[1398,655],[1409,632],[1442,644],[1473,615],[1463,611],[1482,601],[1486,592],[1503,576],[1544,637],[1553,619],[1557,651],[1565,677],[1573,683],[1568,718],[1627,594],[1641,587],[1658,579],[1664,609],[1677,631],[1684,592],[1694,574],[1710,558],[1728,584],[1721,585],[1729,608],[1737,598],[1769,584],[1764,588],[1807,541],[1829,513],[1826,519],[1853,501],[1878,705],[1892,734],[1883,820],[1921,671]];
const ENTRIES = [[872,875],[882,866],[878,864],[898,876],[935,866],[917,869],[928,891],[959,848],[985,859],[1019,863],[1014,858],[1072,809],[1067,805],[1114,775],[1108,778],[1105,776],[1136,790],[1133,787],[1127,783],[1143,775],[1151,776],[1156,782],[1186,761],[1182,762],[1192,760],[1216,743],[1222,750],[1273,701],[1299,677],[1337,618],[1351,650],[1357,655],[1367,661],[1344,686],[1398,686],[1410,663],[1440,678],[1463,641],[1473,645],[1480,633],[1486,624],[1503,607],[1544,667],[1553,650],[1556,681],[1574,712],[1565,707],[1568,749],[1626,624],[1641,617],[1658,609],[1664,640],[1677,661],[1684,622],[1694,604],[1710,588],[1721,615],[1728,614],[1730,643],[1737,628],[1768,614],[1764,618],[1807,571],[1829,544],[1826,549],[1842,531],[1853,529],[1878,736],[1892,765],[1883,850],[1921,701]];

// [right edge, text in the upper band, text in the lower band]
const LEVELS = [[915,'','17.604,3'],[940,'','0'],[960,'','2'],[1002,',4','516,4'],[1028,'2,4','2,4'],[1060,'+0,9','0,9'],[1110,'3.896,0','3.886,0'],[1147,'75,3','65,3'],[1170,'5','5'],[1181,'5','5'],[1192,'0','0'],[1212,'s','s'],[1228,'9','9'],[1259,'37,7','27,7'],[1316,'3.361,4','3.351,4'],[1342,'5,2','5,2'],[1380,'49,7','39,7'],[1386,'0','0'],[1394,'3','3'],[1410,'0','0'],[1440,'64,1','54,1'],[1453,'9','9'],[1485,'97,9','87,9'],[1506,'2,9','2,9'],[1516,'2','2'],[1524,'2','2'],[1547,',2',',2'],[1586,'574,8','564,8'],[1596,'0','0'],[1608,'3','3'],[1669,'5.989,5','5.979,5'],[1684,'0','0'],[1701,',8',',8'],[1719,'4','4'],[1727,'0','0'],[1737,'5','5'],[1753,',9',',9'],[1764,'0','0'],[1779,'8','8'],[1807,'5,6','5,6'],[1850,'322,7','312,7'],[1868,',7',',7'],[1884,'3','3'],[1896,'3','3'],[1920,'7,7','7,7'],[1935,'0','0'],[1963,'63,6','53,6']];

// small repeatable generator, keeps the curves identical on reload
let seed = 11;
function rnd() {
    seed = (seed * 16807) % 2147483647;
    return seed / 2147483647;
}

function el(id) {
    return document.getElementById(id);
}

function line(points, color, width) {
    return `<polyline points="${points.join(' ')}" fill="none" stroke="${color}" stroke-width="${width}" stroke-linejoin="round"/>`;
}

// rounded line through the points, for the moving averages
function curve(p, color) {
    let d = `M${p[0]}`;
    for (let i = 0; i < p.length - 1; i++) {
        const a = p[i - 1] || p[i];
        const b = p[i + 2] || p[i + 1];
        d += `C${p[i][0] + (p[i + 1][0] - a[0]) / 6} ${p[i][1] + (p[i + 1][1] - a[1]) / 6} `;
        d += `${p[i + 1][0] - (b[0] - p[i][0]) / 6} ${p[i + 1][1] - (b[1] - p[i][1]) / 6} ${p[i + 1]}`;
    }
    return `<path d="${d}" fill="none" stroke="${color}" stroke-width="1.800"/>`;
}

function drawPalette() {
    el('palette').innerHTML = COLORS.map((c, i) =>
        `<button aria-label="${c}" class="${i === 5 ? 'selected' : ''}" style="background-color: ${c}"></button>`).join('');
}

function drawBars() {
    const bars = [[32,130],[117,130],[144,19],[231,130],[287,167],[315,167],[371,130],[400,167],[456,167]];
    let s = '<path d="M17 1v195M130 1v195M244 1v195M357 1v195M469 1v195M1 19h510M1 55h510M1 92h510M1 130h510M1 167h510" stroke="#bccad1"/>';
    s += '<path d="M1 196V1h510v195M511 19h4M511 55h4M511 92h4M511 130h4M511 167h4" fill="none" stroke="#8198a3" stroke-width="2"/>';
    bars.forEach(([x, y]) => {
        s += `<rect x="${x}" y="${y}" width="25" height="${204 - y}" fill="url(#gGreen)" stroke="#149014"/>`;
    });
    el('bars').innerHTML = s;
}

function drawEquity() {
    let s = `<polygon points="827,384 ${EQUITY.join(' ')} 1937,384" fill="#c9dcff"/>`;
    s += line(EQUITY, '#639bff', 3);
    DRAWDOWNS.forEach(d => {
        s += `<path d="M${d[0]} ${d[1]}L${d[2]} ${d[3]}" stroke="#ffa31f" stroke-width="2"/>`;
    });
    s += '<path d="M826 384H1973" stroke="#2020e0" stroke-width="1.500"/><path d="M828 205V475" stroke="#000" stroke-width="2"/>';
    el('equity').innerHTML = s;
}

// each box lies over the start of the one to its right
function drawBand(y, fill, stroke, col) {
    let s = '';
    for (let i = LEVELS.length - 1; i >= 0; i--) {
        const left = i > 0 ? LEVELS[i - 1][0] - 4 : 827;
        const right = LEVELS[i][0] + (i === LEVELS.length - 1 ? 5 : 2);
        s += `<rect x="${left}" y="${y}" width="${right - left}" height="23" rx="3" fill="${fill}" stroke="${stroke}"/>`;
        s += `<text x="${LEVELS[i][0]}" y="${y + 17}" class="level">${LEVELS[i][col]}</text>`;
    }
    return s;
}

function drawPrice() {
    const points = [];
    for (let i = 0; i < PRICE.length - 1; i++) {
        const [x1, y1] = PRICE[i];
        const [x2, y2] = PRICE[i + 1];
        points.push(PRICE[i]);
        for (let x = x1 + 2; x < x2; x += 2) {
            const y = y1 + (y2 - y1) * (x - x1) / (x2 - x1);
            points.push([x, Math.round(y + (rnd() - 0.5) * 10)]);
        }
    }
    points.push(PRICE[PRICE.length - 1]);

    let s = line(points, '#000', 1.7);
    s += curve(MA_FAST, '#ff1414') + curve(MA_SLOW, '#ff1446');
    ENTRIES.forEach(([x, y]) => {
        s += `<path d="M${x} ${y - 9}l7 8h-3v10h-7v-10h-4z" fill="url(#gBlue)" stroke="#3b73d6"/>`;
    });
    EXITS.forEach(([x, y]) => {
        s += `<rect x="${x - 8}" y="${y - 4}" width="17" height="9" fill="url(#gOrange)" stroke="#d98613"/>`;
    });
    s += drawBand(479, '#f3e2c0', '#f6d99a', 1);
    s += '<text x="998" y="498">Tägl. Hoch 27.037,1 + Tief 26.232,8</text>';
    s += drawBand(918, '#c8deff', '#86b2fa', 2);
    s += '<text x="829" y="938">©IT-Finance.com-<tspan class="copyright">Daten sind indikativ</tspan></text>';
    el('price').innerHTML = s;
}

function drawRsi() {
    const points = [];
    let up = true;
    let x = 829;
    while (x < 1928) {
        const middle = 1009 + 9 * Math.sin(x / 23) + 5 * Math.sin(x / 9);
        const size = 3 + 27 * Math.sqrt(rnd());
        let y = middle + (up ? -size : size);
        if (rnd() > 0.95) {
            y += up ? -14 : 16;
        }
        y = Math.max(960, Math.min(1055, y));
        points.push([Math.round(x * 2) / 2, Math.round(y)]);
        x += rnd() > 0.4 ? 1.5 + rnd() * 1.5 : 3 + rnd() * 2;
        if (rnd() > 0.15) {
            up = !up;
        }
    }
    points.push([1931, 990], [1933, 1012], [1937, 976]);
    let s = '<clipPath id="over"><path d="M826 946H1973V986H826z"/></clipPath>';
    s += `<polygon points="829,1011 ${points.join(' ')} 1937,1011" fill="#f59aa8" clip-path="url(#over)"/>`;
    s += '<path d="M826 1011H1973" stroke="#111" stroke-width="1.500" stroke-dasharray="6 6"/>';
    s += line(points, '#3a3a40', 1.7);
    s += '<path d="M826 986H1973" stroke="#f11" stroke-width="1.500"/><path d="M826 1034H1973" stroke="#1e2" stroke-width="1.500"/>';
    el('rsi').innerHTML = s;
}

function axis(id, labels, ticks, tags) {
    let s = '';
    ticks.forEach(y => {
        s += `<path d="M1974 ${y}h3" stroke="#7d99a6"/>`;
    });
    labels.forEach(([y, text, bold]) => {
        s += `<path d="M1974 ${y}h5" stroke="#7d99a6" stroke-width="1.500"/><text x="1982" y="${y + 6}" class="${bold ? 'bold' : ''}">${text}</text>`;
    });
    tags.forEach(([y, text, width, color, fill, bold]) => {
        s += `<path d="M1974 ${y}h6" stroke="${color}" stroke-width="1.500"/><rect x="1979.500" y="${y - 9}" width="${width}" height="19" fill="${fill}" stroke="#8ba5b1"/>`;
        s += `<text x="1981" y="${y + 6}" fill="${color}" class="${bold ? 'bold' : ''}">${text}</text>`;
    });
    el(id).innerHTML = s;
}

function drawTimeAxis() {
    const names = ['Apr', 'Jul', 'Okt', '2017', 'Apr', 'Jul', 'Okt', '2018', 'Apr', 'Jul', 'Okt', '2019', 'Apr', 'Jul', 'Okt', '2020', 'Apr', 'Jul'];
    el('time-axis').innerHTML = names.map((name, i) => {
        const x = 867 + Math.round(i * 63.9);
        return `<path d="M${x} 1075v5" stroke="#7d99a6" stroke-width="1.500"/><text x="${x}" y="1096" class="${name > '2' && name < '3' ? 'bold' : ''}">${name}</text>`;
    }).join('');
}

drawPalette();
drawBars();
drawEquity();
drawPrice();
drawRsi();
axis('equity-axis', [[186, '3.800'], [236, '3.600'], [285, '3.400'], [335, '3.200'], [384, '3.000', true], [434, '2.800']], [211, 261, 310, 360, 409, 459],
    [[194, '3.770', 43, '#639bff', '#e4ebfa']]);
axis('price-axis', [[489, '30.000', true], [546, '28.000'], [606, '26.000'], [666, '24.000'], [726, '22.000'], [787, '20.000', true], [847, '18.000'], [907, '16.000']], [],
    [[576, '27.070,4', 64, '#000', '#f6d21a', true], [623, '25.504,9', 64, '#ff1446', '#e8eefa'], [643, '24.838,8', 64, '#ff1414', '#e8eefa']]);
axis('rsi-axis', [[954, '100', true], [998, '60'], [1022, '40'], [1045, '20']], [963, 975, 986, 1011, 1034, 1057],
    [[978, '77,595', 52, '#333', '#e4ebf5']]);
drawTimeAxis();
```
